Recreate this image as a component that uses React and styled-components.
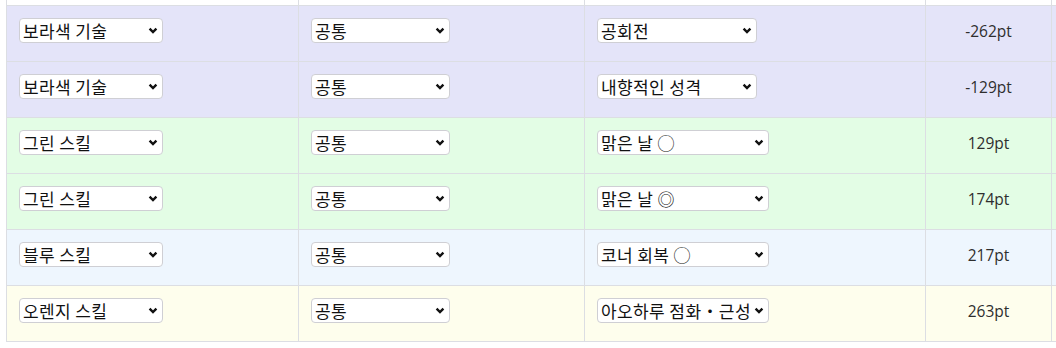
import React from 'react';
import styled, { createGlobalStyle } from 'styled-components';

const GlobalStyle = createGlobalStyle`
  html, body {
    margin: 0;
    padding: 0;
    overflow: hidden;
    background: #fff;
  }
`;

const Wrapper = styled.div`
  padding-left: 6px;
  width: 1300px;
`;

const Table = styled.table`
  border-collapse: collapse;
  table-layout: fixed;
  width: 1245px;
  font-family: 'Noto Sans CJK KR', 'Noto Sans', sans-serif;
`;

const rowColors = {
  purple: '#e4e4f9',
  green: '#e3fde5',
  blue: '#eef6fe',
  orange: '#fefeed',
};

const Row = styled.tr`
  background: ${({ $tone }) => rowColors[$tone] || '#fff'};
`;

const Cell = styled.td`
  border: 1px solid #dcdee3;
  padding: 12px 12px 17px;
  height: 25px;
  vertical-align: top;
  line-height: 25px;
`;

const HeadCell = styled.td`
  border: 1px solid #dcdee3;
  border-top: 0;
  padding: 0;
  height: 5px;
`;

const PointCell = styled(Cell)`
  text-align: center;
  font-family: 'Open Sans', 'Noto Sans', sans-serif;
  font-size: 15.5px;
  color: #2e2e2e;
  padding-top: 13px;
`;

const SelectWrap = styled.span`
  position: relative;
  display: inline-block;
  vertical-align: top;
  width: ${({ $w }) => $w}px;
  height: 25px;
`;

const Select = styled.select`
  appearance: none;
  -webkit-appearance: none;
  box-sizing: border-box;
  width: 100%;
  height: 25px;
  margin: 0;
  padding: 0 15px 0 3px;
  border: 1px solid #cfcfd4;
  border-radius: 4px;
  background: #fff;
  color: #111;
  font-family: 'Noto Sans CJK KR', 'Noto Sans', sans-serif;
  font-size: 17px;
  letter-spacing: 0.4px;
  line-height: 23px;
  outline: none;
`;

const Chevron = styled.svg`
  position: absolute;
  right: 5px;
  top: 9px;
  width: 10px;
  height: 7px;
  pointer-events: none;
`;

const Dropdown = ({ value, width }) => (
  <SelectWrap $w={width}>
    <Select defaultValue={value}>
      <option>{value}</option>
    </Select>
    <Chevron viewBox="0 0 10 7">
      <polyline points="1.6,1.6 5,5 8.4,1.6" fill="none" stroke="#111" strokeWidth="2.4" />
    </Chevron>
  </SelectWrap>
);

const rows = [
  { tone: 'purple', type: '보라색 기술', scope: '공통', skill: '공회전', w: 160, pt: '-262pt' },
  { tone: 'purple', type: '보라색 기술', scope: '공통', skill: '내향적인 성격', w: 160, pt: '-129pt' },
  { tone: 'green', type: '그린 스킬', scope: '공통', skill: '맑은 날 ◯', w: 172, pt: '129pt' },
  { tone: 'green', type: '그린 스킬', scope: '공통', skill: '맑은 날 ◎', w: 172, pt: '174pt' },
  { tone: 'blue', type: '블루 스킬', scope: '공통', skill: '코너 회복 ◯', w: 172, pt: '217pt' },
  { tone: 'orange', type: '오렌지 스킬', scope: '공통', skill: '아오하루 점화・근성', w: 172, pt: '263pt' },
];

const App = () => (
  <>
    <GlobalStyle />
    <Wrapper>
      <Table>
        <colgroup>
          <col style={{ width: 292 }} />
          <col style={{ width: 286 }} />
          <col style={{ width: 341 }} />
          <col style={{ width: 126 }} />
          <col style={{ width: 200 }} />
        </colgroup>
        <tbody>
          <Row>
            <HeadCell />
            <HeadCell />
            <HeadCell />
            <HeadCell />
            <HeadCell />
          </Row>
          {rows.map((r, i) => (
            <Row key={i} $tone={r.tone}>
              <Cell>
                <Dropdown value={r.type} width={144} />
              </Cell>
              <Cell>
                <Dropdown value={r.scope} width={139} />
              </Cell>
              <Cell>
                <Dropdown value={r.skill} width={r.w} />
              </Cell>
              <PointCell>{r.pt}</PointCell>
              <Cell />
            </Row>
          ))}
        </tbody>
      </Table>
    </Wrapper>
  </>
);

export default App;
